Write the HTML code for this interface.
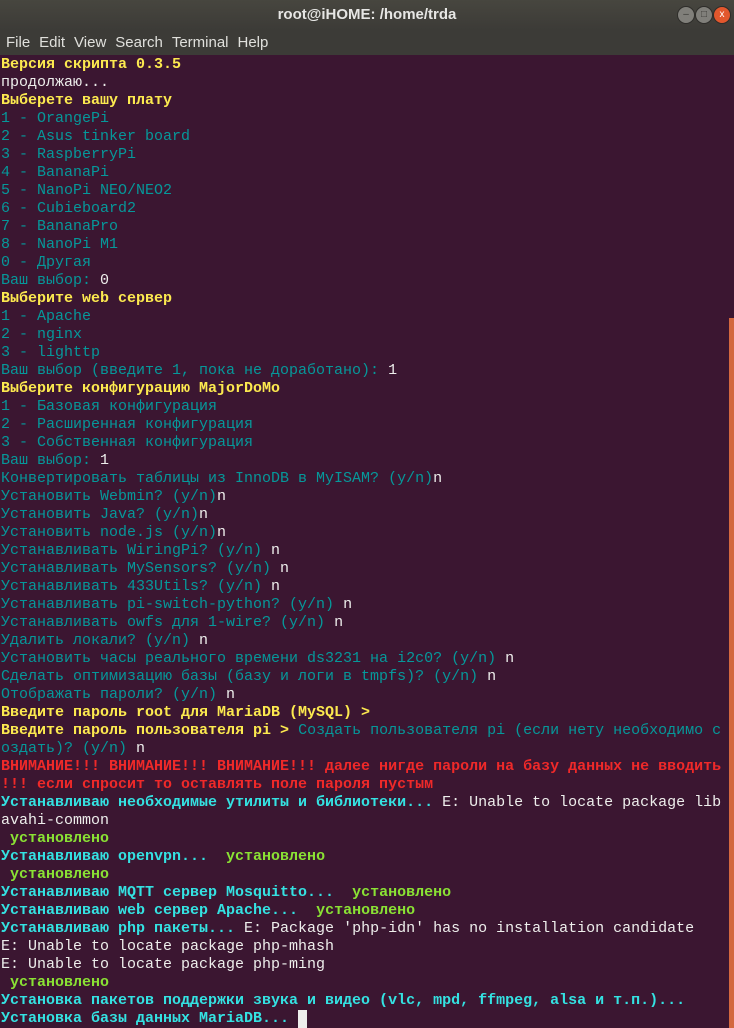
<!DOCTYPE html>
<html><head><meta charset="utf-8"><style>
body{margin:0;width:734px;height:1028px;overflow:hidden;background:#3b1631;position:relative}
#tb{position:absolute;left:0;top:0;width:734px;height:30px;background:linear-gradient(#47463f,#3c3b37);color:#e6e6e4;font:bold 15px "Liberation Sans",sans-serif;text-align:center;line-height:29px}
.b{position:absolute;top:6px;width:18px;height:18px;border-radius:50%;background:#807f7a;border:1px solid #2e2d2a;box-sizing:border-box;font:10px "Liberation Sans";line-height:16px;color:#3a3935}
#mb{position:absolute;left:0;top:30px;width:734px;height:25px;background:#3c3b37;color:#e0e0dc;font:15px "Liberation Sans",sans-serif;line-height:26px}
#mb span{margin-left:6px;margin-right:3px}
pre{position:absolute;left:1px;top:56px;margin:0;font:15px/18px "Liberation Mono","DejaVu Sans Mono",monospace;color:#eeeeec;white-space:pre}
.y{color:#fce94f;font-weight:bold}.c{color:#06989a}.C{color:#34e2e2;font-weight:bold}.g{color:#8ae234;font-weight:bold}.r{color:#ef2929;font-weight:bold}
#sb{position:absolute;left:729px;top:318px;width:5px;height:710px;background:#d3683f}
.cur{display:inline-block;width:9px;height:18px;background:#eeeeec;vertical-align:top}
</style></head><body>
<div id="tb">root@iHOME: /home/trda
<div class="b" style="left:677px">–</div><div class="b" style="left:695px">□</div><div class="b" style="left:713px;background:#e2572d;color:#fff">x</div></div>
<div id="mb"><span>File</span><span>Edit</span><span>View</span><span>Search</span><span>Terminal</span><span>Help</span></div>
<pre><span class="y">Версия скрипта 0.3.5</span>
продолжаю...
<span class="y">Выберете вашу плату</span>
<span class="c">1 - OrangePi
2 - Asus tinker board
3 - RaspberryPi
4 - BananaPi
5 - NanoPi NEO/NEO2
6 - Cubieboard2
7 - BananaPro
8 - NanoPi M1
0 - Другая
Ваш выбор: </span>0
<span class="y">Выберите web сервер</span>
<span class="c">1 - Apache
2 - nginx
3 - lighttp
Ваш выбор (введите 1, пока не доработано): </span>1
<span class="y">Выберите конфигурацию MajorDoMo</span>
<span class="c">1 - Базовая конфигурация
2 - Расширенная конфигурация
3 - Собственная конфигурация
Ваш выбор: </span>1
<span class="c">Конвертировать таблицы из InnoDB в MyISAM? (y/n)</span>n
<span class="c">Установить Webmin? (y/n)</span>n
<span class="c">Установить Java? (y/n)</span>n
<span class="c">Установить node.js (y/n)</span>n
<span class="c">Устанавливать WiringPi? (y/n) </span>n
<span class="c">Устанавливать MySensors? (y/n) </span>n
<span class="c">Устанавливать 433Utils? (y/n) </span>n
<span class="c">Устанавливать pi-switch-python? (y/n) </span>n
<span class="c">Устанавливать owfs для 1-wire? (y/n) </span>n
<span class="c">Удалить локали? (y/n) </span>n
<span class="c">Установить часы реального времени ds3231 на i2c0? (y/n) </span>n
<span class="c">Сделать оптимизацию базы (базу и логи в tmpfs)? (y/n) </span>n
<span class="c">Отображать пароли? (y/n) </span>n
<span class="y">Введите пароль root для MariaDB (MySQL) &gt;</span>
<span class="y">Введите пароль пользователя pi &gt; </span><span class="c">Создать пользователя pi (если нету необходимо с
оздать)? (y/n) </span>n
<span class="r">ВНИМАНИЕ!!! ВНИМАНИЕ!!! ВНИМАНИЕ!!! далее нигде пароли на базу данных не вводить
!!! если спросит то оставлять поле пароля пустым</span>
<span class="C">Устанавливаю необходимые утилиты и библиотеки... </span>E: Unable to locate package lib
avahi-common
<span class="g"> установлено</span>
<span class="C">Устанавливаю openvpn... </span><span class="g"> установлено</span>
<span class="g"> установлено</span>
<span class="C">Устанавливаю MQTT сервер Mosquitto... </span><span class="g"> установлено</span>
<span class="C">Устанавливаю web сервер Apache... </span><span class="g"> установлено</span>
<span class="C">Устанавливаю php пакеты... </span>E: Package 'php-idn' has no installation candidate
E: Unable to locate package php-mhash
E: Unable to locate package php-ming
<span class="g"> установлено</span>
<span class="C">Установка пакетов поддержки звука и видео (vlc, mpd, ffmpeg, alsa и т.п.)...</span>
<span class="C">Установка базы данных MariaDB... </span><span class="cur"></span></pre>
<div id="sb"></div>
</body></html>
